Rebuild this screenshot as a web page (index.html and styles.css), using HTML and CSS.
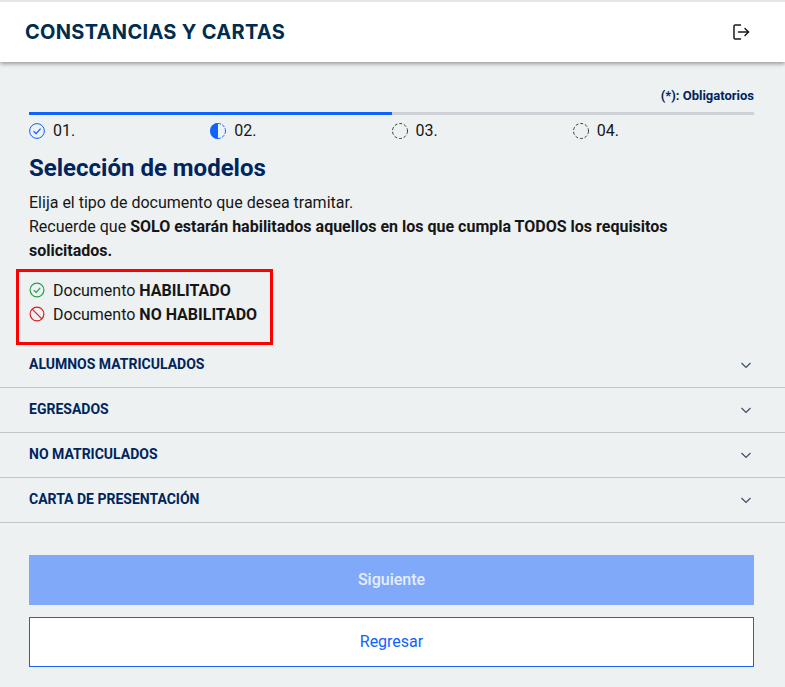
FILE: index.html
```html
<!DOCTYPE html>
<html lang="es">
<head>
<meta charset="utf-8">
<title>Constancias y cartas</title>
<link rel="stylesheet" href="styles.css">
</head>
<body>
<header class="topbar">
  <h1 class="topbar-title">CONSTANCIAS Y CARTAS</h1>
  <svg class="logout" width="20" height="20" viewBox="0 0 20 20" fill="none" stroke="#1a1a1a" stroke-width="1.5" stroke-linecap="round" stroke-linejoin="round"><path d="M9.5 3H4.2C3.5 3 3 3.5 3 4.2V15.8C3 16.5 3.5 17 4.2 17H9.5"/><path d="M7.5 10H17.5"/><path d="M14 6.5L17.5 10L14 13.5"/></svg>
</header>
<main class="content">
  <p class="required">(*): Obligatorios</p>
  <div class="progress"><div class="progress-fill"></div></div>
  <ol class="steps">
    <li class="step">
      <svg width="16" height="16" viewBox="0 0 16 16" fill="none" stroke="#0f62fe"><circle cx="8" cy="8" r="7.4"/><path d="M4.6 8.2L7.1 10.6L11.6 5.6" stroke-width="1.3"/></svg>
      <span>01.</span>
    </li>
    <li class="step">
      <svg width="16" height="16" viewBox="0 0 16 16" fill="none"><path d="M8 0A8 8 0 0 0 8 16Z" fill="#0f62fe"/><circle cx="8" cy="8" r="7.5" stroke="#0f62fe" stroke-dasharray="3 1.4"/></svg>
      <span>02.</span>
    </li>
    <li class="step">
      <svg width="16" height="16" viewBox="0 0 16 16" fill="none"><circle cx="8" cy="8" r="7.5" stroke="#3a3f45" stroke-dasharray="3 1.9"/></svg>
      <span>03.</span>
    </li>
    <li class="step">
      <svg width="16" height="16" viewBox="0 0 16 16" fill="none"><circle cx="8" cy="8" r="7.5" stroke="#3a3f45" stroke-dasharray="3 1.9"/></svg>
      <span>04.</span>
    </li>
  </ol>
  <h2 class="section-title">Selección de modelos</h2>
  <p class="intro">Elija el tipo de documento que desea tramitar.<br>Recuerde que <strong>SOLO estarán habilitados aquellos en los que cumpla TODOS los requisitos solicitados.</strong></p>
  <div class="legend">
    <div class="legend-row">
      <svg width="16" height="16" viewBox="0 0 16 16" fill="none" stroke="#24a148" stroke-width="1.2"><circle cx="8" cy="8" r="6.9"/><path d="M4.8 8.2L7.2 10.5L11.2 5.8" stroke-width="1.2"/></svg>
      <span>Documento <strong>HABILITADO</strong></span>
    </div>
    <div class="legend-row">
      <svg width="16" height="16" viewBox="0 0 16 16" fill="none" stroke="#da1e28" stroke-width="1.2"><circle cx="8" cy="8" r="6.9"/><path d="M3.2 3.2L12.8 12.8" stroke-width="1.2"/></svg>
      <span>Documento <strong>NO HABILITADO</strong></span>
    </div>
  </div>
  <ul class="accordion">
    <li class="accordion-row"><span>ALUMNOS MATRICULADOS</span><svg class="chevron" width="16" height="16" viewBox="0 0 16 16" fill="none" stroke="#3d4f66" stroke-width="1.2"><path d="M3.5 6L8 10.5L12.5 6"/></svg></li>
    <li class="accordion-row"><span>EGRESADOS</span><svg class="chevron" width="16" height="16" viewBox="0 0 16 16" fill="none" stroke="#3d4f66" stroke-width="1.2"><path d="M3.5 6L8 10.5L12.5 6"/></svg></li>
    <li class="accordion-row"><span>NO MATRICULADOS</span><svg class="chevron" width="16" height="16" viewBox="0 0 16 16" fill="none" stroke="#3d4f66" stroke-width="1.2"><path d="M3.5 6L8 10.5L12.5 6"/></svg></li>
    <li class="accordion-row"><span>CARTA DE PRESENTACIÓN</span><svg class="chevron" width="16" height="16" viewBox="0 0 16 16" fill="none" stroke="#3d4f66" stroke-width="1.2"><path d="M3.5 6L8 10.5L12.5 6"/></svg></li>
  </ul>
  <div class="actions">
    <button class="btn btn-primary" type="button">Siguiente</button>
    <button class="btn btn-outline" type="button">Regresar</button>
  </div>
</main>
</body>
</html>
```
FILE: styles.css
```css
* { box-sizing: border-box; }
html, body { margin: 0; padding: 0; }
body {
  width: 785px;
  height: 687px;
  overflow: hidden;
  background: #edf1f2;
  font-family: Roboto, sans-serif;
  font-size: 16px;
  color: #161616;
}
.topbar {
  height: 62px;
  background: #fff;
  border-top: 2px solid #e4e6e8;
  padding: 0 34px 0 25px;
  display: flex;
  align-items: center;
  justify-content: space-between;
  box-shadow: 0 2px 4px rgba(0, 0, 0, 0.35);
}
.topbar-title {
  margin: 0;
  font-family: Inter, sans-serif;
  font-size: 20px;
  font-weight: 700;
  letter-spacing: 0.3px;
  color: #002d4f;
  line-height: 24px;
}
.content { padding: 0 31px 0 29px; }
.required {
  margin: 0;
  padding-top: 26px;
  text-align: right;
  font-size: 13px;
  font-weight: 700;
  line-height: 16px;
  color: #00245c;
}
.progress {
  margin-top: 8px;
  height: 3px;
  background: #ced2d7;
}
.progress-fill { width: 50%; height: 100%; background: #0f62fe; }
.steps {
  list-style: none;
  margin: 8px 0 0;
  padding: 0;
  display: grid;
  grid-template-columns: repeat(4, 1fr);
}
.step {
  display: flex;
  align-items: center;
  gap: 8px;
  height: 16px;
  line-height: 16px;
}
.section-title {
  margin: 15px 0 0;
  font-size: 24px;
  line-height: 28px;
  font-weight: 700;
  color: #00245c;
}
.intro {
  margin: 9px 0 0;
  line-height: 24px;
}
.legend {
  margin: 6px 0 0 -13px;
  width: 257px;
  height: 76px;
  border: 3px solid #f00;
  padding: 6px 10px 0;
}
.legend-row {
  display: flex;
  align-items: center;
  gap: 8px;
  height: 24px;
}
.accordion {
  list-style: none;
  margin: -2px -31px 0 -29px;
  padding: 0;
}
.accordion-row {
  height: 45px;
  padding: 0 31px 2px 29px;
  border-bottom: 1px solid #c2c6c9;
  display: flex;
  align-items: center;
  justify-content: space-between;
  font-size: 14px;
  font-weight: 700;
  color: #00245c;
}
.chevron { margin-top: 2px; }
.actions {
  margin-top: 32px;
  display: flex;
  flex-direction: column;
  gap: 12px;
}
.btn {
  height: 50px;
  width: 100%;
  padding: 0 0 2px;
  font-family: Roboto, sans-serif;
  font-size: 16px;
  border-radius: 0;
}
.btn-primary { border: 0; background: #80a9fa; color: #e6eefd; font-weight: 500; }
.btn-outline { border: 1px solid #0f62fe; background: #fff; color: #0f62fe; }
```
